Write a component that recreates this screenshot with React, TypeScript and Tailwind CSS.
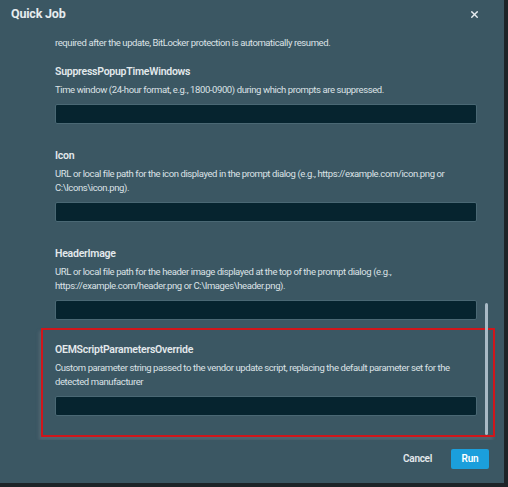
import { X } from "lucide-react";

type Field = {
  name: string;
  help: string;
};

const fields: Field[] = [
  {
    name: "SuppressPopupTimeWindows",
    help: "Time window (24-hour format, e.g., 1800-0900) during which prompts are suppressed.",
  },
  {
    name: "Icon",
    help: "URL or local file path for the icon displayed in the prompt dialog (e.g., https://example.com/icon.png or C:\\Icons\\icon.png).",
  },
  {
    name: "HeaderImage",
    help: "URL or local file path for the header image displayed at the top of the prompt dialog (e.g., https://example.com/header.png or C:\\Images\\header.png).",
  },
];

const override: Field = {
  name: "OEMScriptParametersOverride",
  help: "Custom parameter string passed to the vendor update script, replacing the default parameter set for the detected manufacturer",
};

function ParamField({ field }: { field: Field }) {
  return (
    <div className="flex flex-col">
      <label className="text-[10.5px] leading-[16px] font-semibold text-[#e3e9ec] tracking-[-0.25px]">
        {field.name}
      </label>
      <p className="mt-[3px] text-[9.5px] leading-[14px] text-[#dbe2e6] tracking-[-0.4px] pr-[6px]">
        {field.help}
      </p>
      <input
        type="text"
        className="mt-[7px] h-[20px] w-full rounded-[2px] border border-[#4a6874] bg-[#06242f] outline-none"
      />
    </div>
  );
}

export default function App() {
  return (
    <div
      className="w-[508px] h-[487px] bg-[#1d2428] overflow-hidden"
      style={{ fontFamily: "Roboto, 'Liberation Sans', sans-serif" }}
    >
      <div className="relative flex flex-col w-[504px] h-[483px] bg-[#3b5763]">
        {/* Title bar */}
        <div className="flex items-center justify-between h-[28px] pl-[11px] pr-[24px]">
          <h2 className="text-[12.5px] font-bold text-[#e6ecef] tracking-[-0.2px]">
            Quick Job
          </h2>
          <X size={11} strokeWidth={3} className="text-[#e6ecef]" />
        </div>

        {/* Scrolling parameter list */}
        <div className="relative flex-1 overflow-hidden">
          <div className="flex flex-col pl-[55px] pr-[27px] pt-[8px]">
            <p className="text-[9.5px] leading-[14px] text-[#dbe2e6] tracking-[-0.4px]">
              required after the update, BitLocker protection is automatically resumed.
            </p>
            <div className="mt-[14px] flex flex-col gap-[24px]">
              {fields.map((f) => (
                <ParamField key={f.name} field={f} />
              ))}
              <div className="relative mt-[-2px]">
                <ParamField field={override} />
                <div className="absolute top-[-14px] left-[-14px] right-[-18px] bottom-[-21px] border-2 border-[#d0161b] shadow-[-2px_3px_3px_rgba(120,130,140,0.35)] pointer-events-none" />
              </div>
            </div>
          </div>
          {/* Scroll thumb */}
          <div className="absolute left-[485px] top-[275px] w-[3px] h-[132px] rounded-full bg-[#a9bac6]" />
        </div>

        {/* Footer */}
        <div className="flex items-center justify-end gap-[19px] h-[43px] pr-[15px] pb-[6px]">
          <button className="text-[10px] font-semibold text-[#e3e9ec] tracking-[-0.3px]">
            Cancel
          </button>
          <button className="w-[38px] h-[20px] rounded-[2px] bg-[#1b9fdc] text-[10px] font-semibold text-white tracking-[-0.2px]">
            Run
          </button>
        </div>
      </div>
    </div>
  );
}
